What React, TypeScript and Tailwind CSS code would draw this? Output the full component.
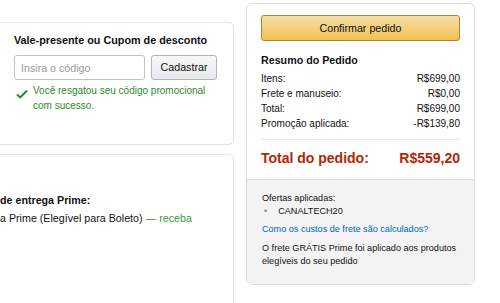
import React from 'react';

const rows = [
  { label: 'Itens:', value: 'R$699,00' },
  { label: 'Frete e manuseio:', value: 'R$0,00' },
  { label: 'Total:', value: 'R$699,00' },
  { label: 'Promoção aplicada:', value: '-R$139,80' },
];

const CouponCard: React.FC = () => (
  <div className="h-[123px] shrink-0 rounded-r-md border border-l-0 border-[#e3e3e3] pl-[14px] pr-[16px] pt-[10px]">
    <h3 className="text-[10.8px] font-bold leading-[15px] text-[#111]">
      Vale-presente ou Cupom de desconto
    </h3>
    <div className="mt-[7px] flex gap-[6px]">
      <input
        className="h-[25px] w-[131px] rounded-[3px] border border-[#c2c2c2] px-[6px] text-[10.7px] text-[#111] placeholder:text-[#9a9a9a] outline-none"
        placeholder="Insira o código"
      />
      <button className="h-[25px] w-[67px] rounded-[3px] border border-[#b2b5ba] bg-gradient-to-b from-[#f7f8fa] to-[#e7e9ec] text-[10.7px] text-[#111]">
        Cadastrar
      </button>
    </div>
    <div className="mt-[3px] flex items-start gap-[5px] pl-[2px]">
      <svg width="12" height="12" viewBox="0 0 12 12" className="mt-[5px] shrink-0">
        <path d="M1 6.5 L4.3 9.5 L11 2.5" fill="none" stroke="#1f8a2c" strokeWidth="1.9" />
      </svg>
      <p className="text-[10px] leading-[15px] text-[#2b8a2b]">
        Você resgatou seu código promocional
        <br />
        com sucesso.
      </p>
    </div>
  </div>
);

const DeliveryCard: React.FC = () => (
  <div className="h-[200px] shrink-0 rounded-r-md border border-l-0 border-[#e3e3e3] pt-[36px]">
    <p className="whitespace-nowrap text-[10.7px] font-bold leading-[18px] text-[#111]">
      de entrega Prime:
    </p>
    <p className="whitespace-nowrap text-[10.7px] leading-[18px] text-[#111]">
      a Prime (Elegível para Boleto) <span className="text-[#3a9a3a]">— receba</span>
    </p>
  </div>
);

const OrderSummary: React.FC = () => (
  <div className="ml-[12px] mt-[3px] h-[282px] w-[229px] overflow-hidden rounded-md border border-[#dddddd]">
    <div className="px-[14px] pb-[11px] pt-[11px]">
      <button className="h-[26px] w-full rounded-[3px] border border-[#a88734] bg-gradient-to-b from-[#f7dfa5] to-[#f0c14b] text-[10.7px] text-[#111]">
        Confirmar pedido
      </button>
      <h3 className="mt-[12px] text-[10.7px] font-bold leading-[15px] text-[#111]">Resumo do Pedido</h3>
      <div className="mt-[3px]">
        {rows.map((r) => (
          <div key={r.label} className="flex justify-between text-[10px] leading-[15px] text-[#111]">
            <span>{r.label}</span>
            <span>{r.value}</span>
          </div>
        ))}
      </div>
      <div className="mt-[8px] border-t border-[#e7e7e7]" />
      <div className="mt-[8px] flex justify-between text-[14px] font-bold leading-[20px] text-[#b12704]">
        <span>Total do pedido:</span>
        <span>R$559,20</span>
      </div>
    </div>
    <div className="h-full border-t border-[#dddddd] bg-[#f3f3f3] px-[15px] pt-[12px] text-[9.1px] leading-[13px] text-[#111]">
      <p>Ofertas aplicadas:</p>
      <ul className="pl-[2px]">
        <li className="flex gap-[11px]">
          <span className="text-[#888]">•</span>
          <span>CANALTECH20</span>
        </li>
      </ul>
      <p className="mt-[5px] text-[#0066c0]">Como os custos de frete são calculados?</p>
      <p className="mt-[6px]">
        O frete GRÁTIS Prime foi aplicado aos produtos
        <br />
        elegíveis do seu pedido
      </p>
    </div>
  </div>
);

export default function App() {
  return (
    <div className="flex h-[303px] w-[500px] overflow-hidden bg-white font-['Liberation_Sans',Arial,sans-serif]">
      <div className="flex w-[234px] shrink-0 flex-col gap-[9px] pt-[22px]">
        <CouponCard />
        <DeliveryCard />
      </div>
      <OrderSummary />
    </div>
  );
}
